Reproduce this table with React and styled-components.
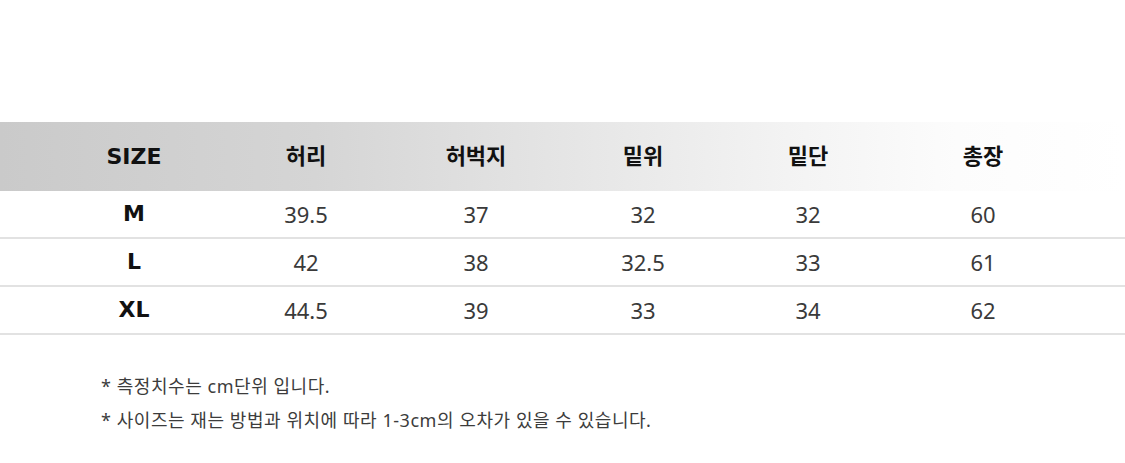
import React from "react";
import styled, { createGlobalStyle } from "styled-components";

const GlobalStyle = createGlobalStyle`
  html, body {
    margin: 0;
    padding: 0;
    background: #fff;
  }
  body {
    font-family: "Noto Sans", "Noto Sans CJK KR", sans-serif;
  }
`;

const columns = ["SIZE", "허리", "허벅지", "밑위", "밑단", "총장"];

const rows = [
  ["M", "39.5", "37", "32", "32", "60"],
  ["L", "42", "38", "32.5", "33", "61"],
  ["XL", "44.5", "39", "33", "34", "62"],
];

const notes = [
  "* 측정치수는 cm단위 입니다.",
  "* 사이즈는 재는 방법과 위치에 따라 1-3cm의 오차가 있을 수 있습니다.",
];

const Page = styled.div`
  width: 1125px;
  height: 463px;
  padding-top: 122px;
  box-sizing: border-box;
  overflow: hidden;
`;

const Table = styled.div`
  width: 100%;
`;

const Row = styled.div`
  display: grid;
  grid-template-columns: 172px 172px 168px 166px 164px 186px;
  padding-left: 48px;
  align-items: center;
  height: ${(p) => (p.$head ? "69px" : "46px")};
  border-bottom: ${(p) => (p.$head ? "none" : "2px solid #e2e2e2")};
  background: ${(p) =>
    p.$head
      ? "linear-gradient(to right, #cacaca 0%, #d5d5d5 28%, #e5e5e5 50%, #f3f3f3 70%, #fcfcfc 85%, #ffffff 100%)"
      : "#fff"};
`;

const Cell = styled.div`
  text-align: center;
  font-size: 22px;
  line-height: 1;
  color: ${(p) => (p.$bold ? "#111" : "#3a3a3a")};
  font-weight: ${(p) => (p.$bold ? 700 : 400)};
  font-family: ${(p) =>
    p.$bold
      ? '"DejaVu Sans", "Noto Sans CJK KR", sans-serif'
      : '"Noto Sans", "Noto Sans CJK KR", sans-serif'};
`;

const Notes = styled.div`
  padding: 34px 0 0 101px;
`;

const Note = styled.p`
  margin: 0;
  font-size: 18px;
  letter-spacing: 0.55px;
  line-height: 34px;
  color: #3c3c3c;
  font-family: "Noto Sans", "Noto Sans CJK KR", sans-serif;
`;

export default function App() {
  return (
    <>
      <GlobalStyle />
      <Page>
        <Table>
          <Row $head>
            {columns.map((c) => (
              <Cell key={c} $bold>
                {c}
              </Cell>
            ))}
          </Row>
          {rows.map((r) => (
            <Row key={r[0]}>
              {r.map((v, i) => (
                <Cell key={i} $bold={i === 0}>
                  {v}
                </Cell>
              ))}
            </Row>
          ))}
        </Table>
        <Notes>
          {notes.map((n) => (
            <Note key={n}>{n}</Note>
          ))}
        </Notes>
      </Page>
    </>
  );
}
